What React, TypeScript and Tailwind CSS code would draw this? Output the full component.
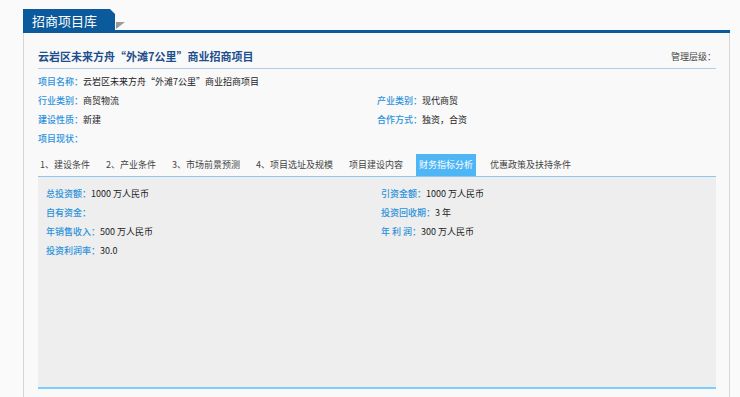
const font = '[font-family:"Noto_Sans_CJK_SC","Liberation_Sans",sans-serif]'

type Field = { label: string; value?: string }

function Line({ label, value }: Field) {
  return (
    <div className="flex h-[19px] items-center whitespace-nowrap">
      <span className="font-medium text-[#2b92dc]">{label}：</span>
      <span className="text-[#222]">{value}</span>
    </div>
  )
}

const TABS = [
  '1、建设条件',
  '2、产业条件',
  '3、市场前景预测',
  '4、项目选址及规模',
  '项目建设内容',
  '财务指标分析',
  '优惠政策及扶持条件',
]
const ACTIVE = '财务指标分析'

export default function App() {
  return (
    <div className={`${font} flex h-[397px] w-full flex-col bg-[#fafafa] pt-2 pl-[23px] pr-[10px]`}>
      {/* шапка раздела */}
      <div className="flex h-[25px] items-end border-b-[3px] border-[#0b5b9c]">
        <div className="-mb-[3px] flex h-[24px] w-[92px] items-center bg-[#0b5b9c] pl-[9px] text-[13px] text-white [clip-path:polygon(0_0,87px_0,92px_5px,92px_100%,0_100%)]">
          招商项目库
        </div>
        <svg width="9" height="7" viewBox="0 0 9 7" className="mb-[1px] ml-[1px] self-end">
          <polygon points="0,0 9,0 0,7" fill="#9a9a9a" />
        </svg>
      </div>

      <div className="flex flex-1 flex-col border-x border-[#d6d6d6] bg-[#f9f9f9] px-[14px] pr-[13px] text-[9px]">
        <div className="mt-[14px] flex h-[22px] items-center justify-between border-b border-[#b4cde4] pb-[2px]">
          <h1 className="text-[11px] font-bold text-[#1d4f8c]">云岩区未来方舟“外滩7公里”商业招商项目</h1>
          <span className="text-[#444]">管理层级：</span>
        </div>

        <div className="mt-[3px] grid grid-cols-2">
          <Line label="项目名称" value="云岩区未来方舟“外滩7公里”商业招商项目" />
          <div />
          <Line label="行业类别" value="商贸物流" />
          <Line label="产业类别" value="现代商贸" />
          <Line label="建设性质" value="新建" />
          <Line label="合作方式" value="独资，合资" />
          <Line label="项目现状" />
          <div />
        </div>

        <div className="mt-[6px] flex h-[23px] items-end gap-[12px] border-b border-[#8dc8f0]">
          {TABS.map((t) =>
            t === ACTIVE ? (
              <div key={t} className="-ml-[1px] flex h-[22px] items-center bg-[#4fb6f6] px-[3px] text-white">
                {t}
              </div>
            ) : (
              <div key={t} className="flex h-[22px] items-center px-[2px] text-[#444]">
                {t}
              </div>
            ),
          )}
        </div>

        <div className="mb-[8px] grid flex-1 grid-cols-2 content-start border-b-2 border-[#7fcdfd] bg-[#eeeeee] pt-[7px] pl-[8px]">
          <Line label="总投资额" value="1000 万人民币" />
          <Line label="引资金额" value="1000 万人民币" />
          <Line label="自有资金" />
          <Line label="投资回收期" value="3 年" />
          <Line label="年销售收入" value="500 万人民币" />
          <Line label="年 利 润" value="300 万人民币" />
          <Line label="投资利润率" value="30.0" />
        </div>
      </div>
    </div>
  )
}
